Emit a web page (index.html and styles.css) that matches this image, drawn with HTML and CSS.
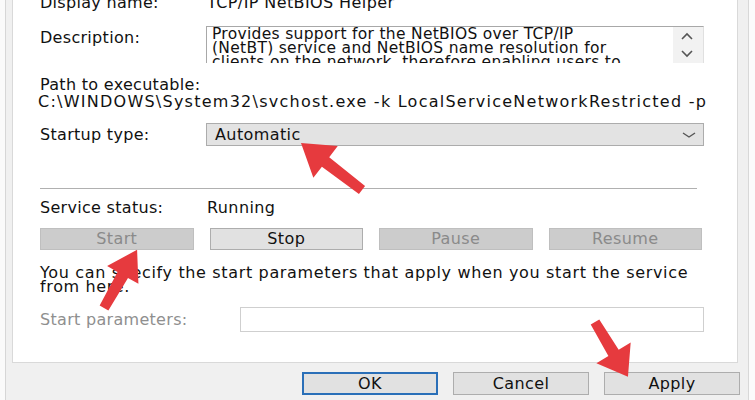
FILE: index.html
```
<!DOCTYPE html>
<html>
<head>
<meta charset="utf-8">
<link rel="stylesheet" href="styles.css">
</head>
<body>
<div class="window">
  <div class="panel">
    <div class="row row-display">
      <div class="label">Display name:</div>
      <div class="value">TCP/IP NetBIOS Helper</div>
    </div>
    <div class="row row-desc">
      <div class="label label-desc">Description:</div>
      <div class="descbox">
        <div class="desctext">Provides support for the NetBIOS over TCP/IP<br>(NetBT) service and NetBIOS name resolution for<br>clients on the network, therefore enabling users to<br>share files, print, and log on to the network.</div>
        <div class="scroll">
          <svg width="30" height="36" viewBox="0 0 30 36"><path d="M9 12 L14 7 L19 12" fill="none" stroke="#555" stroke-width="1.6"/><path d="M9 24 L14 29 L19 24" fill="none" stroke="#555" stroke-width="1.6"/></svg>
        </div>
      </div>
    </div>
    <div class="path">
      <div>Path to executable:</div>
      <div class="pathval">C:\WINDOWS\System32\svchost.exe -k LocalServiceNetworkRestricted -p</div>
    </div>
    <div class="row row-startup">
      <div class="label">Startup type:</div>
      <div class="dropdown">
        <span>Automatic</span>
        <svg width="16" height="10" viewBox="0 0 16 10"><path d="M2 3 L8 7 L14 3" fill="none" stroke="#555" stroke-width="1.4"/></svg>
      </div>
    </div>
    <div class="sep"></div>
    <div class="row row-status">
      <div class="label">Service status:</div>
      <div class="value">Running</div>
    </div>
    <div class="svcbtns">
      <div class="btn disabled">Start</div>
      <div class="btn">Stop</div>
      <div class="btn disabled">Pause</div>
      <div class="btn disabled">Resume</div>
    </div>
    <p class="hint">You can specify the start parameters that apply when you start the service<br>from here.</p>
    <div class="row row-params">
      <div class="label label-params">Start parameters:</div>
      <div class="input"></div>
    </div>
  </div>
  <div class="dlgbtns">
    <div class="btn dlg ok">OK</div>
    <div class="btn dlg">Cancel</div>
    <div class="btn dlg">Apply</div>
  </div>
  <svg class="arrows" width="755" height="400" viewBox="0 0 755 400">
    <g fill="#e63a3e">
      <polygon transform="translate(362 190) rotate(217.6)" points="0,-5 46,-6 46,-20 77,0 46,20 46,6 0,5"/>
      <polygon transform="translate(104 308) rotate(-60.4)" points="0,-5 38,-6 38,-18 67,0 38,18 38,6 0,5"/>
      <polygon transform="translate(595 322) rotate(59)" points="0,-5 36,-6 36,-20 64,0 36,20 36,6 0,5"/>
    </g>
  </svg>
</div>
</body>
</html>
```
FILE: styles.css
```
* { box-sizing: border-box; }
html, body { margin: 0; padding: 0; }
body {
  width: 755px;
  height: 400px;
  overflow: hidden;
  background: #f0f0f0;
  font-family: "DejaVu Sans", sans-serif;
  font-size: 16px;
  line-height: 18px;
  color: #111;
}
.window {
  position: relative;
  width: 755px;
  height: 400px;
  background:
    linear-gradient(to right, #fafafa 0 5px, #d6d6d6 5px 6px, transparent 6px),
    linear-gradient(to left, #fbfbfb 0 6px, #d8d8d8 6px 7px, transparent 7px),
    #f0f0f0;
}
.panel {
  margin-left: 12px;
  width: 726px;
  height: 363px;
  background: #fff;
  border: 1px solid #d9d9d9;
  border-top: none;
  padding-left: 27px;
  overflow: hidden;
}
.row { display: flex; align-items: flex-start; }
.label { width: 166px; flex: none; letter-spacing: 0.3px; }
.row-display { margin-top: -6px; }
.value { padding-left: 1px; letter-spacing: 0.4px; }
.row-desc { margin-top: 14px; }
.label-desc { padding-top: 3px; }
.descbox {
  width: 498px;
  height: 37px;
  border: 1px solid #a8a8a8;
  border-bottom: none;
  border-right-color: #e0e0e0;
  display: flex;
  overflow: hidden;
}
.desctext {
  flex: 1;
  padding-left: 5px;
  font-size: 15.5px;
  line-height: 14px;
  letter-spacing: 0.3px;
  white-space: nowrap;
  overflow: hidden;
}
.scroll {
  width: 30px;
  flex: none;
  background: #f2f2f2;
}
.scroll svg { display: block; }
.path { margin-top: 13px; line-height: 17px; letter-spacing: 0.3px; }
.pathval {
  margin-left: -2px;
  width: 668px;
  white-space: nowrap;
  overflow: hidden;
  letter-spacing: 1.25px;
}
.row-startup { margin-top: 13px; align-items: center; }
.dropdown {
  width: 498px;
  height: 23px;
  background: #e3e3e3;
  border: 1px solid #acacac;
  display: flex;
  align-items: center;
  justify-content: space-between;
  padding: 0 6px 0 8px;
  letter-spacing: 0.4px;
}
.sep {
  margin-top: 42px;
  width: 657px;
  height: 1px;
  background: #b0b0b0;
}
.row-status { margin-top: 10px; }
.svcbtns {
  margin-top: 11px;
  width: 662px;
  display: grid;
  grid-template-columns: repeat(4, 1fr);
  column-gap: 16px;
}
.btn {
  height: 22px;
  border: 1px solid #adadad;
  background: #e1e1e1;
  display: flex;
  align-items: center;
  justify-content: center;
  color: #111;
  letter-spacing: 0.4px;
}
.btn.disabled {
  background: #cccccc;
  border-color: #bfbfbf;
  color: #8a8a8a;
}
.hint {
  margin: 16px 0 0;
  line-height: 14px;
  letter-spacing: 0.65px;
}
.row-params { margin-top: 13px; align-items: center; }
.label-params { width: 200px; color: #8f8f8f; }
.input {
  width: 464px;
  height: 25px;
  border: 1px solid #cfcfcf;
  background: #fff;
}
.dlgbtns {
  margin: 9px 0 0 302px;
  display: flex;
  gap: 15px;
}
.btn.dlg { width: 136px; height: 23px; }
.btn.ok { border: 2px solid #2a6fb8; }
.arrows { position: absolute; left: 0; top: 0; pointer-events: none; }
```
